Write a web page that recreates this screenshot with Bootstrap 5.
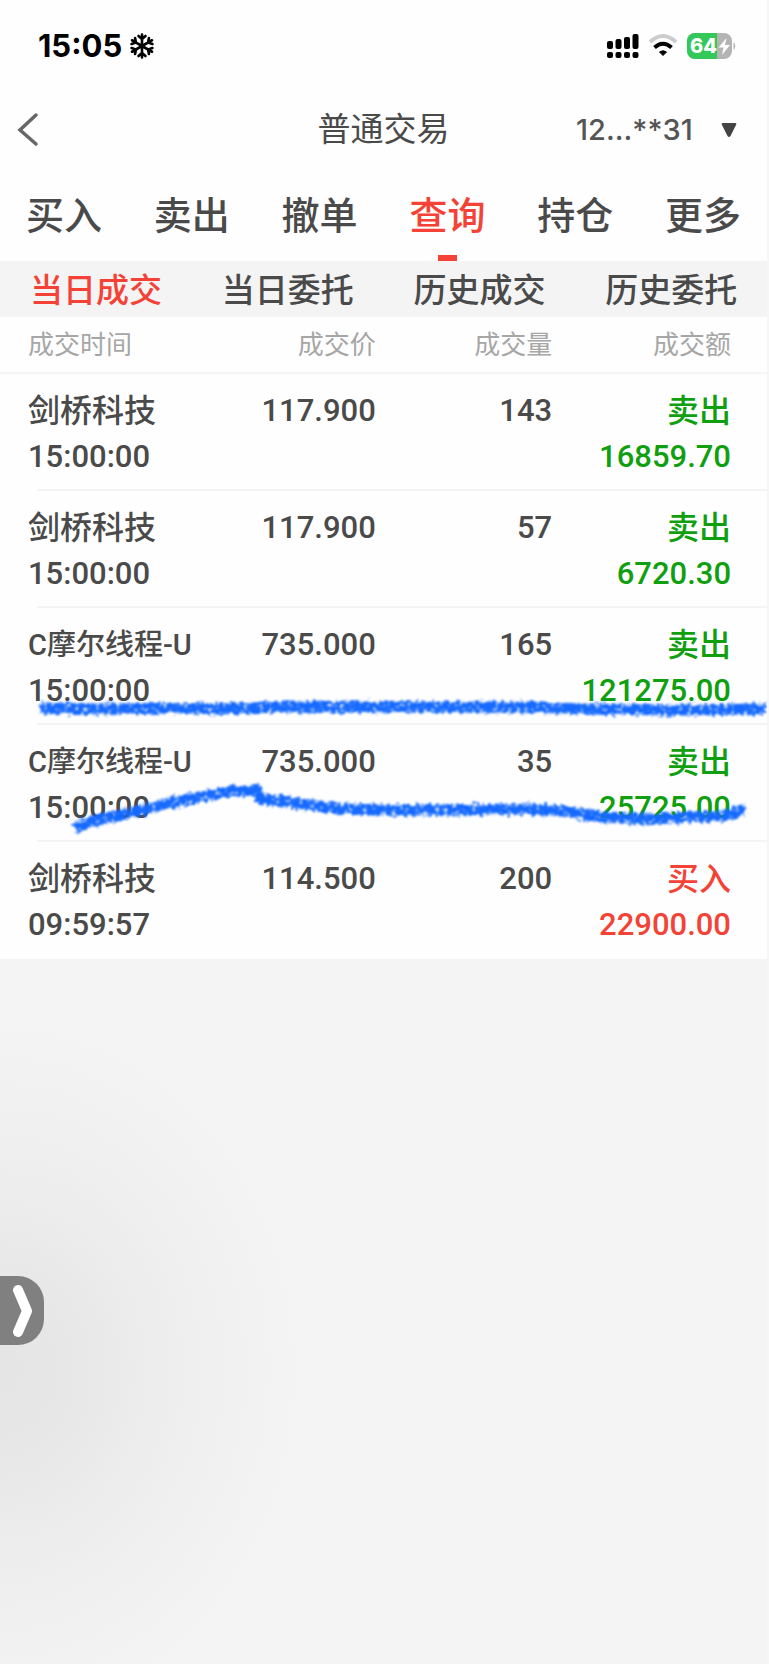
<!DOCTYPE html>
<html lang="zh-CN">
<head>
<meta charset="utf-8">
<meta name="viewport" content="width=device-width, initial-scale=1">
<title>普通交易</title>
<link rel="stylesheet" href="https://cdn.jsdelivr.net/npm/bootstrap@5.3.0/dist/css/bootstrap.min.css">
<style>
  :root { --ink: #4a4a4a; --hot: #f44336; --sell: #0f9f0f; --band: #f4f4f4; }
  body { font-family: Roboto, "Noto Sans CJK SC", sans-serif; color: var(--ink); background: var(--band); }
  .app { border-right: 2px solid #f6f6f6; background: radial-gradient(360px 420px at 0 1370px, #e4e4e4 0%, #e9e9e9 28%, #efefef 52%, #f3f3f3 80%, var(--band) 100%); }
  .top-sheet { background: #fefefe; }
  .status { height: 92px; padding: 0 30px 0 38px; font-family: Inter, sans-serif; }
  .clock { font-size: 31px; font-weight: 700; line-height: 40px; color: #000; }
  .title-bar { height: 76px; padding: 0 16px; }
  .title-bar h1 { font-size: 33px; line-height: 40px; font-weight: 400; }
  .side { flex: 1 1 0; }
  .caret { margin-right: 14px; }
  .account { appearance: none; border: 0; background: transparent; padding: 0; font: 500 29px/40px Inter, sans-serif; color: #555; }
  .main-tabs .nav-link { padding: 28px 0 25px; font-size: 38px; line-height: 40px; font-weight: 500; color: var(--ink); position: relative; }
  .main-tabs .nav-link.active { color: var(--hot); }
  .main-tabs .nav-link.active::after { content: ""; position: absolute; bottom: 0; left: 50%; margin-left: -9px; width: 19px; height: 6px; background: var(--hot); }
  .sub-tabs { background: var(--band); }
  .sub-tabs .nav-link { padding: 10px 0 6px; font-size: 33px; line-height: 40px; font-weight: 500; color: var(--ink); }
  .sub-tabs .nav-link.active { color: var(--hot); }
  .deals { table-layout: fixed; width: 100%; font-size: 31px; line-height: 46px; font-weight: 500; }
  .deals th { height: 56px; padding: 0; font-size: 26px; line-height: 40px; font-weight: 400; color: #a6a6a6; border-bottom: 2px solid #f5f5f5; }
  .deals td { padding: 14px 0 11px; vertical-align: top; }
  .deals th:first-child, .deals td:first-child { padding-left: 28px; }
  .deals th:last-child, .deals td:last-child { padding-right: 36px; }
  .deals tbody tr:not(:last-child) { background: linear-gradient(#f4f4f4, #f4f4f4) no-repeat 37px 100% / 100% 2px; }
  .c-name { width: 26%; } .c-price { width: 23%; } .c-count { width: 23%; }
  .cjk { font-size: 32px; }
  .mixed { font-size: 29px; }
  .sell { color: var(--sell); } .buy { color: var(--hot); }
  .marker { top: 0; left: 0; width: 100%; pointer-events: none; }
  .drawer { margin-top: 317px; width: 44px; height: 69px; border: 0; padding: 0 0 0 11px; border-radius: 0 26px 26px 0; background: #808080; }
</style>
</head>
<body>
<div class="app min-vh-100">
  <div class="top-sheet">
    <div class="status d-flex align-items-center justify-content-between">
      <div class="d-flex align-items-center gap-2">
        <span class="clock">15:05</span>
        <svg width="24" height="26" viewBox="-12 -13 24 26" fill="none" stroke="#000" stroke-width="2.6" stroke-linecap="round" aria-hidden="true">
          <defs><path id="arm" d="M0 0V-11.5M-3.5 -10L0 -7L3.500 -10"/></defs>
          <use href="#arm"/><use href="#arm" transform="rotate(60)"/><use href="#arm" transform="rotate(120)"/><use href="#arm" transform="rotate(180)"/><use href="#arm" transform="rotate(240)"/><use href="#arm" transform="rotate(300)"/>
        </svg>
      </div>
      <div class="d-flex align-items-center">
        <svg width="32" height="26" viewBox="0 0 32 26" aria-hidden="true">
          <rect x="0" y="8" width="6" height="8" rx="2"/><rect x="8.500" y="6" width="6" height="10" rx="2"/><rect x="17" y="4" width="6" height="12" rx="2"/><rect x="25.500" y="1" width="6" height="15" rx="2"/>
          <rect x="0" y="19" width="6" height="6" rx="2"/><rect x="8.500" y="19" width="6" height="6" rx="2"/><rect x="17" y="19" width="6" height="6" rx="2"/><rect x="25.500" y="19" width="6" height="6" rx="2"/>
        </svg>
        <svg class="ms-2" width="32" height="26" viewBox="0 0 32 26" fill="none" stroke-width="4" aria-hidden="true">
          <path d="M3 9Q16 -3 29 9" stroke="#ccc"/><path d="M7.500 14.500Q16 7 24.500 14.500" stroke="#000"/><path d="M12.500 19Q16 16.500 19.500 19L16 22.500Z" fill="#000" stroke="#000" stroke-width="1"/>
        </svg>
        <svg class="ms-2" width="50" height="26" viewBox="0 0 50 26" role="img" aria-label="64%">
          <defs><clipPath id="cell"><rect width="45" height="26" rx="8"/></clipPath></defs>
          <g clip-path="url(#cell)"><rect width="45" height="26" fill="#b4b4b4"/><rect width="30" height="26" fill="#34c759"/></g>
          <path d="M46.500 9Q50 13 46.500 17Z" fill="#b4b4b4"/>
          <text x="3" y="20" font-size="20" font-weight="800" fill="#fff">64</text>
          <path d="M39.500 5L31.500 14.500H36.500L35 22L43 12H38Z" fill="#fff"/>
        </svg>
      </div>
    </div>

    <header class="title-bar d-flex align-items-center">
      <div class="side">
        <button class="btn p-0 border-0 d-flex" type="button" aria-label="返回">
          <svg width="24" height="36" viewBox="0 0 24 36" fill="none" stroke="#666" stroke-width="3.500" stroke-linecap="round"><path d="M20 3L4 18L20 32"/></svg>
        </button>
      </div>
      <h1 class="m-0">普通交易</h1>
      <div class="side d-flex align-items-center justify-content-end">
        <select class="account me-4" aria-label="账户"><option>12...**31</option></select>
        <svg class="caret ms-1" width="16" height="16" viewBox="0 0 16 16" aria-hidden="true"><path d="M2 1H14Q16 1 15 3L9.500 14Q8 16 6.500 14L1 3Q0 1 2 1Z" fill="#444"/></svg>
      </div>
    </header>

    <nav class="main-tabs nav nav-fill flex-nowrap row row-cols-6 g-0 text-center" aria-label="交易">
      <a class="nav-link col" href="#">买入</a><a class="nav-link col" href="#">卖出</a><a class="nav-link col" href="#">撤单</a><a class="nav-link col active" href="#" aria-current="page">查询</a><a class="nav-link col" href="#">持仓</a><a class="nav-link col" href="#">更多</a>
    </nav>
    <nav class="sub-tabs nav row row-cols-4 g-0 text-center" aria-label="查询">
      <a class="nav-link col active" href="#" aria-current="page">当日成交</a><a class="nav-link col" href="#">当日委托</a><a class="nav-link col" href="#">历史成交</a><a class="nav-link col" href="#">历史委托</a>
    </nav>

    <div class="position-relative">
      <table class="deals text-end">
        <thead>
          <tr><th class="c-name text-start" scope="col">成交时间</th><th class="c-price" scope="col">成交价</th><th class="c-count" scope="col">成交量</th><th scope="col">成交额</th></tr>
        </thead>
        <tbody>
          <tr><td class="text-start"><div class="cjk">剑桥科技</div><div>15:00:00</div></td><td>117.900</td><td>143</td><td class="sell"><div class="cjk">卖出</div><div>16859.70</div></td></tr>
          <tr><td class="text-start"><div class="cjk">剑桥科技</div><div>15:00:00</div></td><td>117.900</td><td>57</td><td class="sell"><div class="cjk">卖出</div><div>6720.30</div></td></tr>
          <tr><td class="text-start"><div class="mixed">C摩尔线程-U</div><div>15:00:00</div></td><td>735.000</td><td>165</td><td class="sell"><div class="cjk">卖出</div><div>121275.00</div></td></tr>
          <tr><td class="text-start"><div class="mixed">C摩尔线程-U</div><div>15:00:00</div></td><td>735.000</td><td>35</td><td class="sell"><div class="cjk">卖出</div><div>25725.00</div></td></tr>
          <tr><td class="text-start"><div class="cjk">剑桥科技</div><div>09:59:57</div></td><td>114.500</td><td>200</td><td class="buy"><div class="cjk">买入</div><div>22900.00</div></td></tr>
        </tbody>
      </table>
      <!-- crayon strokes drawn over the third and fourth deals -->
      <svg class="marker position-absolute" viewBox="0 317 767 641" fill="none" stroke="#1569ff" stroke-width="11" stroke-linejoin="round" aria-hidden="true">
        <defs>
          <filter id="crayon" filterUnits="userSpaceOnUse" x="0" y="680" width="767" height="170" color-interpolation-filters="sRGB">
            <feTurbulence type="fractalNoise" baseFrequency="0.25" numOctaves="2" seed="4" result="n"/>
            <feDisplacementMap in="SourceGraphic" in2="n" scale="9" xChannelSelector="R" yChannelSelector="G" result="d"/>
            <feColorMatrix in="n" type="matrix" values="0 0 0 0 0  0 0 0 0 0  0 0 0 0 0  0 0 -4 0 3.3" result="m"/>
            <feComposite in="d" in2="m" operator="in"/>
            <feGaussianBlur stdDeviation="0.8"/>
          </filter>
        </defs>
        <g filter="url(#crayon)">
          <path d="M40 708L100 709L160 708L220 709L270 707L330 707L385 707L440 707L530 707L580 709L680 710L767 709"/>
          <path d="M75 829Q83 822 102 819L130 813L170 803L210 795L235 791L257 790L260 799L290 802L340 809L385 810L450 810L535 809L570 812L600 817L650 819L690 817L725 816L745 809"/>
        </g>
      </svg>
    </div>
  </div>

  <button class="drawer d-flex align-items-center" type="button" aria-label="展开">
    <svg width="24" height="54" viewBox="0 0 24 54" fill="none" stroke="#fff" stroke-width="10" stroke-linecap="round" stroke-linejoin="round"><path d="M7 6L16 27L7 48"/></svg>
  </button>
</div>
<script src="https://cdn.jsdelivr.net/npm/bootstrap@5.3.0/dist/js/bootstrap.bundle.min.js"></script>
</body>
</html>
